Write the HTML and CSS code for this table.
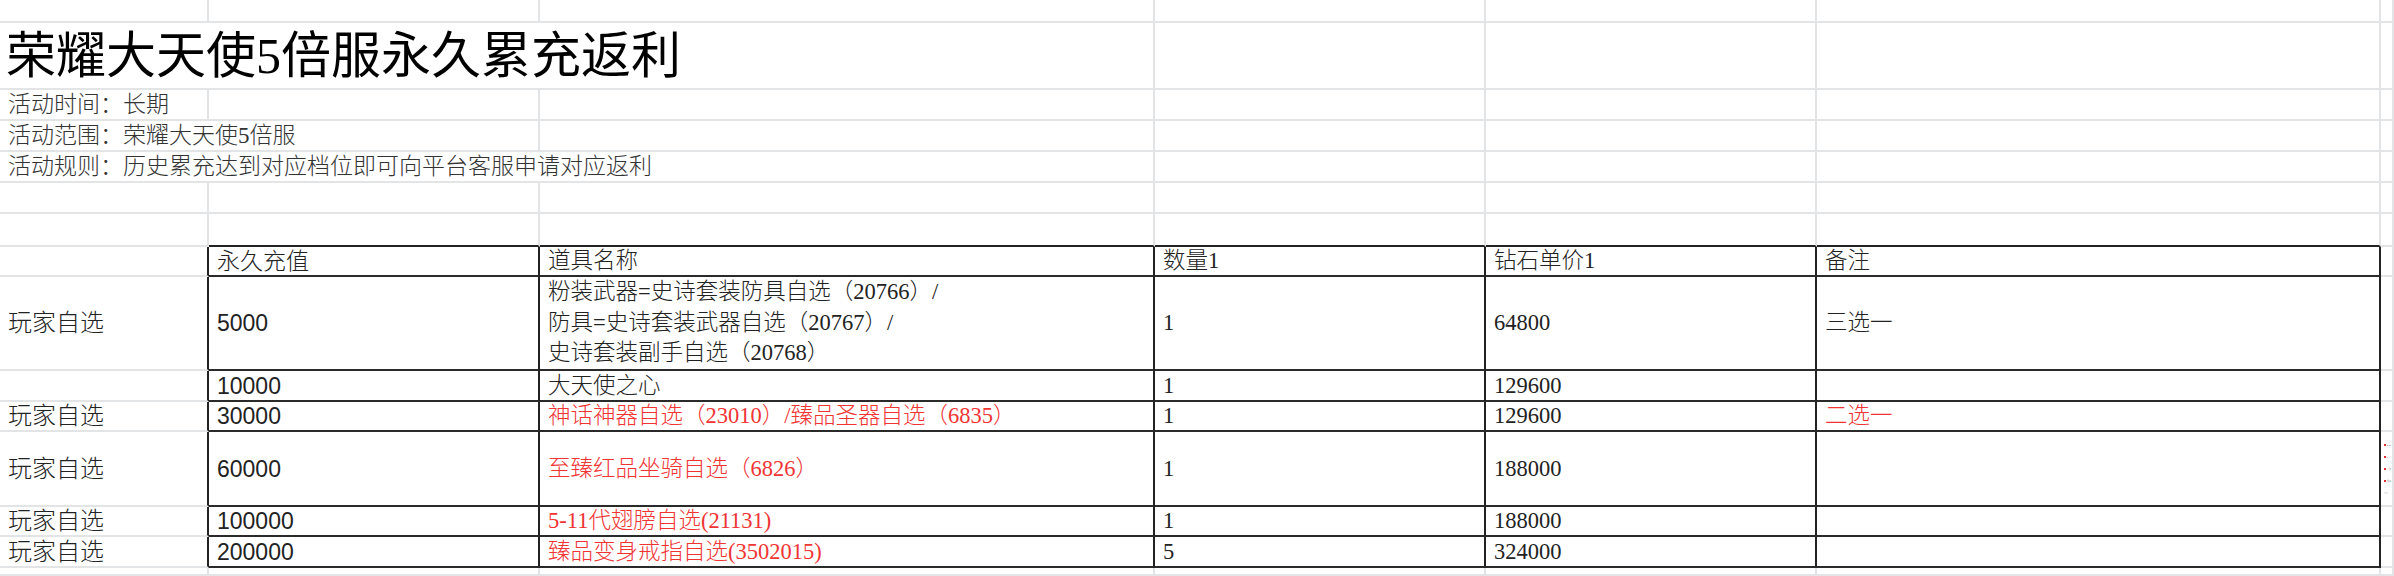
FILE: index.html
```html
<!DOCTYPE html>
<html lang="zh-CN">
<head>
<meta charset="utf-8">
<title>荣耀大天使5倍服永久累充返利</title>
<link rel="stylesheet" href="styles.css">
</head>
<body>
<div class="sheet">
  <!-- row 1 -->
  <div class="c"></div><div class="c"></div><div class="c"></div><div class="c"></div><div class="c"></div><div class="c"></div><div class="c"></div>
  <!-- row 2 -->
  <div class="c span3 title">荣耀大天使5倍服永久累充返利</div>
  <div class="c"></div><div class="c"></div><div class="c"></div><div class="c"></div>
  <!-- row 3 -->
  <div class="c info">活动时间：长期</div>
  <div class="c"></div><div class="c"></div><div class="c"></div><div class="c"></div><div class="c"></div><div class="c"></div>
  <!-- row 4 -->
  <div class="c span2 info">活动范围：荣耀大天使5倍服</div>
  <div class="c"></div><div class="c"></div><div class="c"></div><div class="c"></div><div class="c"></div>
  <!-- row 5 -->
  <div class="c span3 info">活动规则：历史累充达到对应档位即可向平台客服申请对应返利</div>
  <div class="c"></div><div class="c"></div><div class="c"></div><div class="c"></div>
  <!-- row 6 -->
  <div class="c"></div><div class="c"></div><div class="c"></div><div class="c"></div><div class="c"></div><div class="c"></div><div class="c"></div>
  <!-- row 7 -->
  <div class="c"></div><div class="c top"></div><div class="c top"></div><div class="c top"></div><div class="c top"></div><div class="c top"></div><div class="c"></div>

  <!-- header -->
  <div class="c lead"></div>
  <div class="c t sans">永久充值</div>
  <div class="c t serif">道具名称</div>
  <div class="c t serif">数量1</div>
  <div class="c t serif">钻石单价1</div>
  <div class="c t serif">备注</div>
  <div class="c"></div>

  <!-- 5000 -->
  <div class="c lead sans">玩家自选</div>
  <div class="c t sans">5000</div>
  <div class="c t serif"><span class="multi">粉装武器=史诗套装防具自选（20766）/<br>防具=史诗套装武器自选（20767）/<br>史诗套装副手自选（20768）</span></div>
  <div class="c t serif">1</div>
  <div class="c t serif">64800</div>
  <div class="c t serif">三选一</div>
  <div class="c"></div>

  <!-- 10000 -->
  <div class="c lead"></div>
  <div class="c t sans">10000</div>
  <div class="c t serif">大天使之心</div>
  <div class="c t serif">1</div>
  <div class="c t serif">129600</div>
  <div class="c t serif"></div>
  <div class="c"></div>

  <!-- 30000 -->
  <div class="c lead sans">玩家自选</div>
  <div class="c t sans">30000</div>
  <div class="c t serif red">神话神器自选（23010）/臻品圣器自选（6835）</div>
  <div class="c t serif">1</div>
  <div class="c t serif">129600</div>
  <div class="c t serif red">二选一</div>
  <div class="c"></div>

  <!-- 60000 -->
  <div class="c lead sans">玩家自选</div>
  <div class="c t sans">60000</div>
  <div class="c t serif red">至臻红品坐骑自选（6826）</div>
  <div class="c t serif">1</div>
  <div class="c t serif">188000</div>
  <div class="c t serif"></div>
  <div class="c mini">
    <div class="mline"><i class="dot"></i>5-11</div>
    <div class="mline"><i class="dot"></i>1</div>
    <div class="mline"><i class="dot"></i>至臻</div>
    <div class="mline"><i class="dot"></i>臻品</div>
    <div class="mline">史诗</div>
  </div>

  <!-- 100000 -->
  <div class="c lead sans">玩家自选</div>
  <div class="c t sans">100000</div>
  <div class="c t serif red">5-11代翅膀自选(21131)</div>
  <div class="c t serif">1</div>
  <div class="c t serif">188000</div>
  <div class="c t serif"></div>
  <div class="c"></div>

  <!-- 200000 -->
  <div class="c lead sans">玩家自选</div>
  <div class="c t sans">200000</div>
  <div class="c t serif red">臻品变身戒指自选(3502015)</div>
  <div class="c t serif">5</div>
  <div class="c t serif">324000</div>
  <div class="c t serif"></div>
  <div class="c"></div>

  <!-- trailing row -->
  <div class="c"></div><div class="c"></div><div class="c"></div><div class="c"></div><div class="c"></div><div class="c"></div><div class="c"></div>
</div>
</body>
</html>
```

FILE: styles.css
```css
html, body {
  margin: 0;
  padding: 0;
  background: #ffffff;
}

body {
  width: 2394px;
  height: 576px;
  overflow: hidden;
}

.sheet {
  display: grid;
  grid-template-columns: 209px 331px 615px 331px 331px 564px 1fr;
  grid-template-rows: 23px 67px 31px 31px 31px 31px 33px 30px 94px 31px 30px 75px 30px 31px 1fr;
  width: 2394px;
  height: 576px;
  font-family: "Liberation Serif", "Noto Sans CJK SC", serif;
  font-size: 22.5px;
  font-weight: 300;
  color: #222222;
}

.c {
  box-sizing: border-box;
  border-right: 2px solid #e3e4e6;
  border-bottom: 2px solid #e3e4e6;
  display: flex;
  align-items: center;
  padding-left: 8px;
  line-height: 30px;
  white-space: nowrap;
  overflow: hidden;
  min-width: 0;
}

.span2 { grid-column: span 2; }
.span3 { grid-column: span 3; }

.title {
  font-size: 50px;
  line-height: 60px;
  color: #000000;
  font-weight: 400;
  padding-left: 6px;
}

.info {
  font-size: 23px;
  color: #333333;
}

.top { border-bottom-color: #222222; }
.lead { border-right-color: #222222; }
.t {
  border-right-color: #222222;
  border-bottom-color: #2a2a2a;
}

.sans {
  font-family: "Liberation Sans", "Noto Sans CJK SC", sans-serif;
  font-size: 23px;
}

.lead.sans {
  font-size: 24px;
}

.serif {
  font-family: "Liberation Serif", "Noto Sans CJK SC", serif;
  font-size: 22.5px;
}

.red { color: #f03434; }

.multi {
  display: block;
  line-height: 30.5px;
}

.mini {
  flex-direction: column;
  align-items: flex-start;
  justify-content: center;
  gap: 8px;
  padding-left: 3px;
  padding-top: 0;
}

.mline {
  font-family: "Liberation Sans", "Noto Sans CJK SC", sans-serif;
  font-size: 2px;
  line-height: 4px;
  color: #555555;
  display: flex;
  align-items: center;
  gap: 1px;
}

.dot {
  display: inline-block;
  width: 2px;
  height: 2px;
  background: #e23030;
}
```
